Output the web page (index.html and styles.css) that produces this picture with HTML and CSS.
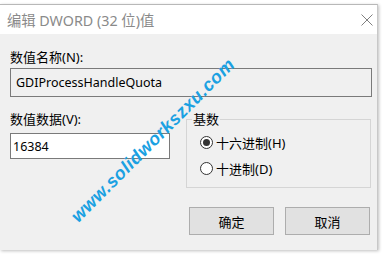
FILE: index.html
```html
<!DOCTYPE html>
<html>
<head>
<meta charset="utf-8">
<link rel="stylesheet" href="styles.css">
</head>
<body>
<div class="dialog">
  <div class="titlebar">
    <span class="title">编辑 DWORD (32 位)值</span>
    <svg class="close" width="12" height="12" viewBox="0 0 12 12"><path d="M0.5 0.5L11.5 11.5M11.5 0.5L0.5 11.5" stroke="#808080" stroke-width="1" fill="none"/></svg>
  </div>
  <div class="content">
    <div class="label">数值名称(N):</div>
    <div class="field readonly">GDIProcessHandleQuota</div>
    <div class="row">
      <div class="col">
        <div class="label">数值数据(V):</div>
        <div class="field data">16384</div>
      </div>
      <fieldset class="group">
        <legend>基数</legend>
        <div class="radio"><span class="dot checked"></span>十六进制(H)</div>
        <div class="radio"><span class="dot"></span>十进制(D)</div>
      </fieldset>
    </div>
    <div class="buttons">
      <div class="btn">确定</div>
      <div class="btn">取消</div>
    </div>
  </div>
  <div class="watermark">www.solidworkszxu.com</div>
</div>
</body>
</html>
```
FILE: styles.css
```css
* { box-sizing: border-box; }
html, body { margin: 0; padding: 0; background: #ffffff; }
body {
  width: 384px; height: 256px; overflow: hidden;
  font-family: "Noto Sans", "Noto Sans CJK SC", sans-serif;
  font-size: 13px; color: #000;
}
.dialog {
  position: relative;
  margin-top: 4px;
  width: 378px;
  height: 246px;
  border-top: 1px solid #b8b8b8;
  border-right: 1px solid #c8c8c8;
  box-shadow: 1px 1px 3px rgba(0,0,0,0.25);
  background: #f0f0f0;
}
.titlebar {
  height: 29px;
  background: #fff;
  display: flex;
  align-items: center;
  justify-content: space-between;
  padding: 0 4px 0 7px;
}
.title { font-size: 14.3px; color: #8a8a8a; }
.content { padding: 15px 6px 0 10px; }
.label { line-height: 16px; height: 16px; }
.field {
  margin-top: 3px;
  height: 29px;
  border: 1px solid #7a7a7a;
  padding: 0 5px;
  display: flex; align-items: center;
  font-size: 12.5px;
}
.readonly { background: #f0f0f0; width: 362px; }
.row { display: flex; margin-top: 14px; }
.col { width: 160px; }
.data { margin-top: 6px; height: 26px; background: #fff; width: 160px; padding-left: 2px; }
.group {
  margin: 0 0 0 16px;
  padding: 2px 0 0 0;
  width: 186px;
  height: 77px;
  border: 1px solid #d5d5d5;
}
.group legend { padding: 0 1px; margin-left: 5px; line-height: 16px; font-size: 13px; }
.radio { display: flex; align-items: center; height: 26px; padding-left: 13px; }
.dot {
  width: 13px; height: 13px; border-radius: 50%;
  border: 1px solid #333; background: #fff; margin-right: 3px;
  display: flex; align-items: center; justify-content: center;
}
.dot.checked::after {
  content: ""; width: 7px; height: 7px; border-radius: 50%; background: #333;
}
.buttons { display: flex; gap: 11px; justify-content: flex-end; margin-top: 19px; padding-right: 1px; }
.btn {
  width: 85px; height: 28px;
  background: #e1e1e1; border: 1px solid #adadad;
  display: flex; align-items: center; justify-content: center;
}
.watermark {
  position: absolute;
  left: 74px; top: 203px;
  transform: rotate(-45deg);
  transform-origin: left center;
  color: #1ba1e2;
  font-family: "Liberation Sans", sans-serif;
  font-weight: bold; font-style: italic;
  font-size: 18px; letter-spacing: 0.5px;
  line-height: 22px;
  white-space: nowrap;
}
```
